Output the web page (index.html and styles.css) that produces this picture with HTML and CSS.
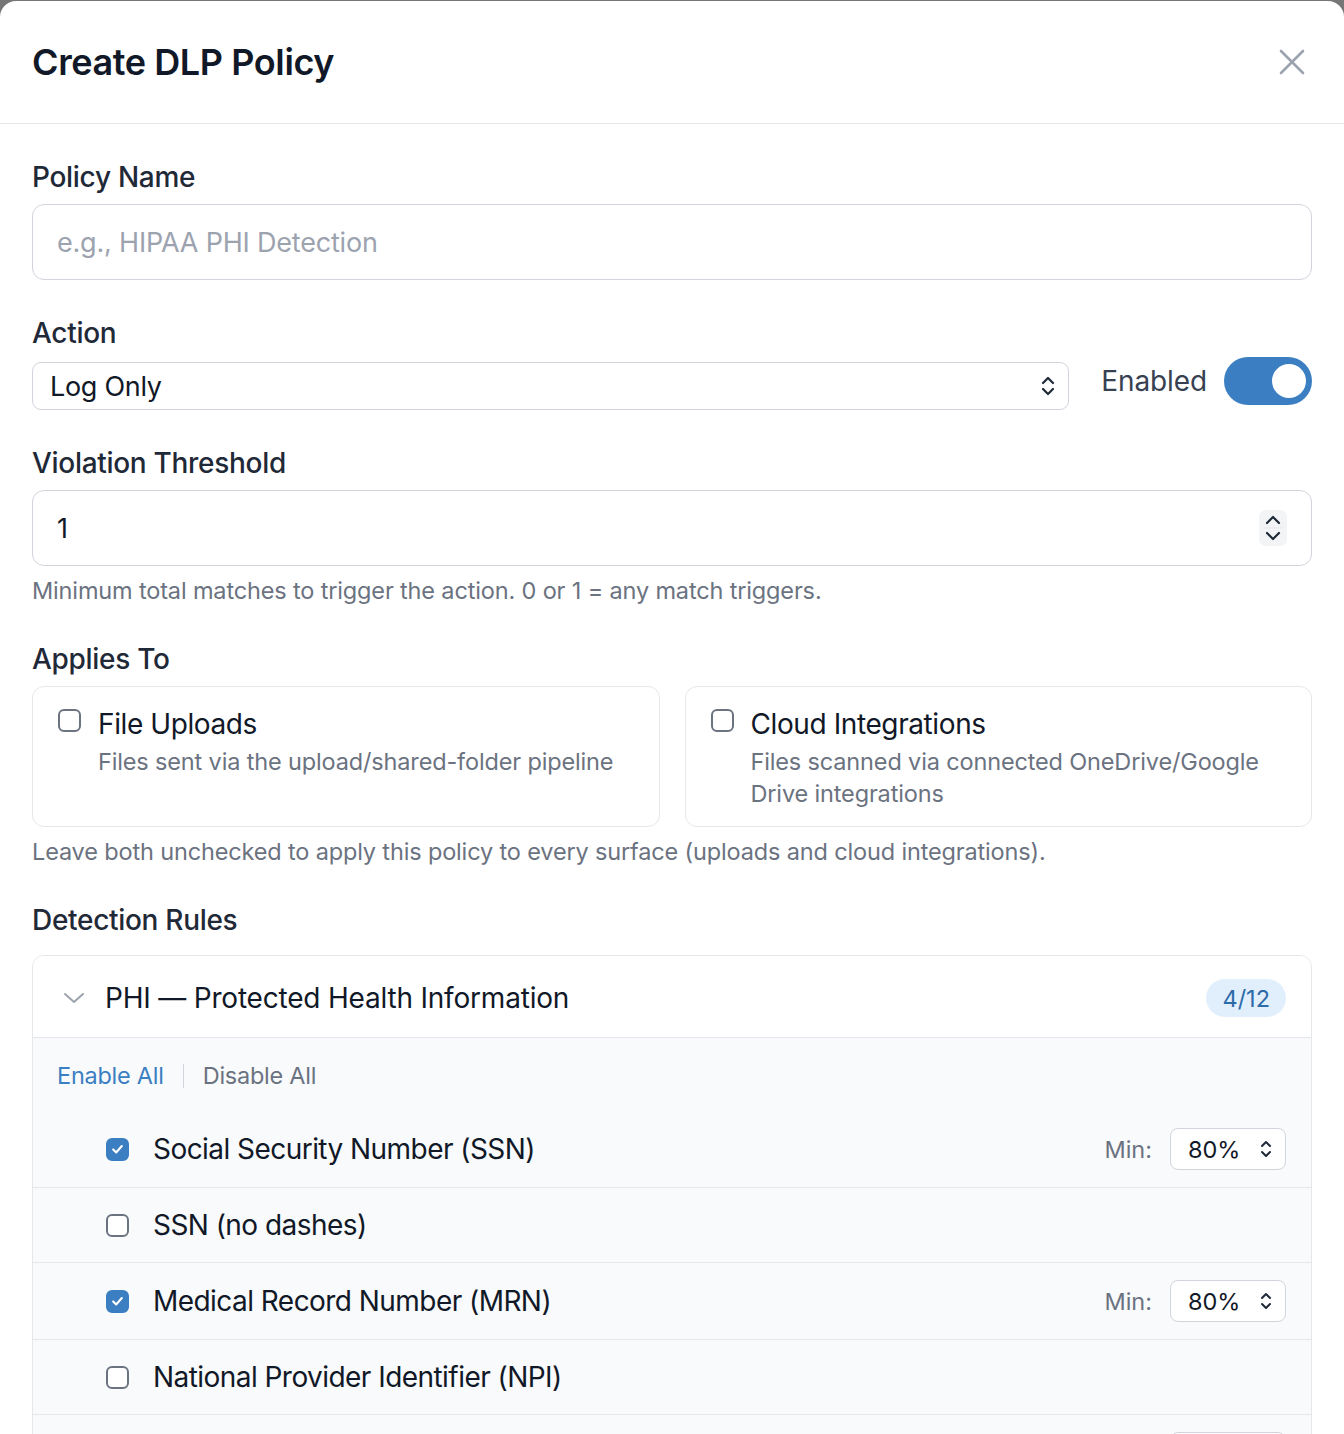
FILE: index.html
```html
<!DOCTYPE html>
<html lang="en">
<head>
<meta charset="utf-8">
<title>Create DLP Policy</title>
<link rel="stylesheet" href="styles.css">
</head>
<body>
<div class="modal">
  <header class="modal-header">
    <h1 class="modal-title">Create DLP Policy</h1>
    <button class="close-btn" aria-label="Close">
      <svg width="28" height="28" viewBox="0 0 28 28"><path d="M3 3 L25 25 M25 3 L3 25" stroke="#9ca3af" stroke-width="2.6" stroke-linecap="round" fill="none"/></svg>
    </button>
  </header>

  <div class="modal-body">
    <div class="field field-first">
      <label class="label">Policy Name</label>
      <input class="text-input" type="text" placeholder="e.g., HIPAA PHI Detection">
    </div>

    <div class="action-row">
      <div class="field grow">
        <label class="label label-action">Action</label>
        <div class="select">
          <span>Log Only</span>
          <svg class="updown" width="16" height="24" viewBox="0 0 16 24"><path d="M3 9 L8 4 L13 9 M3 15 L8 20 L13 15" stroke="#1f2937" stroke-width="2.2" stroke-linecap="round" stroke-linejoin="round" fill="none"/></svg>
        </div>
      </div>
      <div class="enabled-group">
        <span class="enabled-text">Enabled</span>
        <span class="toggle"><span class="knob"></span></span>
      </div>
    </div>

    <div class="field">
      <label class="label">Violation Threshold</label>
      <div class="text-input number-input">
        <span>1</span>
        <span class="spinner">
          <svg width="28" height="36" viewBox="0 0 28 36"><path d="M8 13 L14 7 L20 13 M8 23 L14 29 L20 23" stroke="#1f2937" stroke-width="2.2" stroke-linecap="round" stroke-linejoin="round" fill="none"/><path d="M4 18 H24" stroke="#e5e7eb" stroke-width="1"/></svg>
        </span>
      </div>
      <p class="help">Minimum total matches to trigger the action. 0 or 1 = any match triggers.</p>
    </div>

    <div class="field">
      <label class="label">Applies To</label>
      <div class="surface-grid">
        <div class="surface-card">
          <span class="checkbox"></span>
          <div>
            <div class="surface-title">File Uploads</div>
            <div class="surface-desc">Files sent via the upload/shared-folder pipeline</div>
          </div>
        </div>
        <div class="surface-card">
          <span class="checkbox"></span>
          <div>
            <div class="surface-title">Cloud Integrations</div>
            <div class="surface-desc">Files scanned via connected OneDrive/Google Drive integrations</div>
          </div>
        </div>
      </div>
      <p class="help">Leave both unchecked to apply this policy to every surface (uploads and cloud integrations).</p>
    </div>

    <div class="field">
      <label class="label label-rules">Detection Rules</label>
      <div class="rules-card">
        <div class="rules-header">
          <svg class="chev" width="24" height="24" viewBox="0 0 24 24"><path d="M3 8 L12 16 L21 8" stroke="#9ca3af" stroke-width="2" stroke-linecap="round" stroke-linejoin="round" fill="none"/></svg>
          <span class="rules-title">PHI — Protected Health Information</span>
          <span class="badge">4/12</span>
        </div>
        <div class="rules-body">
          <div class="bulk">
            <a class="link-enable">Enable All</a>
            <span class="sep"></span>
            <a class="link-disable">Disable All</a>
          </div>
          <div class="rule">
            <span class="checkbox checked"><svg width="22" height="22" viewBox="0 0 22 22"><path d="M6 11.5 L9.5 15 L16 7.5" stroke="#fff" stroke-width="2.4" stroke-linecap="round" stroke-linejoin="round" fill="none"/></svg></span>
            <span class="rule-name">Social Security Number (SSN)</span>
            <span class="min-label">Min:</span>
            <div class="mini-select"><span>80%</span><svg width="14" height="22" viewBox="0 0 14 22"><path d="M3 8 L7 4 L11 8 M3 14 L7 18 L11 14" stroke="#1f2937" stroke-width="2" stroke-linecap="round" stroke-linejoin="round" fill="none"/></svg></div>
          </div>
          <div class="rule">
            <span class="checkbox"></span>
            <span class="rule-name">SSN (no dashes)</span>
          </div>
          <div class="rule">
            <span class="checkbox checked"><svg width="22" height="22" viewBox="0 0 22 22"><path d="M6 11.5 L9.5 15 L16 7.5" stroke="#fff" stroke-width="2.4" stroke-linecap="round" stroke-linejoin="round" fill="none"/></svg></span>
            <span class="rule-name">Medical Record Number (MRN)</span>
            <span class="min-label">Min:</span>
            <div class="mini-select"><span>80%</span><svg width="14" height="22" viewBox="0 0 14 22"><path d="M3 8 L7 4 L11 8 M3 14 L7 18 L11 14" stroke="#1f2937" stroke-width="2" stroke-linecap="round" stroke-linejoin="round" fill="none"/></svg></div>
          </div>
          <div class="rule">
            <span class="checkbox"></span>
            <span class="rule-name">National Provider Identifier (NPI)</span>
          </div>
          <div class="rule">
            <span class="checkbox checked"><svg width="22" height="22" viewBox="0 0 22 22"><path d="M6 11.5 L9.5 15 L16 7.5" stroke="#fff" stroke-width="2.4" stroke-linecap="round" stroke-linejoin="round" fill="none"/></svg></span>
            <span class="rule-name">DEA Registration Number</span>
            <span class="min-label">Min:</span>
            <div class="mini-select"><span>80%</span><svg width="14" height="22" viewBox="0 0 14 22"><path d="M3 8 L7 4 L11 8 M3 14 L7 18 L11 14" stroke="#1f2937" stroke-width="2" stroke-linecap="round" stroke-linejoin="round" fill="none"/></svg></div>
          </div>
        </div>
      </div>
    </div>
  </div>
</div>
</body>
</html>
```
FILE: styles.css
```css
* { box-sizing: border-box; }

html, body {
  margin: 0;
  background: #767676;
  font-family: Inter, "Noto Sans", "Liberation Sans", sans-serif;
  color: #111827;
}

.modal {
  margin-top: 1px;
  background: #fff;
  border-radius: 16px 16px 0 0;
  min-height: 1500px;
  overflow: hidden;
}

.modal-header {
  height: 123px;
  display: flex;
  align-items: center;
  justify-content: space-between;
  padding: 0 32px 0 32px;
  border-bottom: 1px solid #e5e7eb;
}

.modal-title {
  margin: 0;
  font-size: 36px;
  font-weight: 600;
  letter-spacing: -0.4px;
  color: #111827;
}

.close-btn {
  border: 0;
  background: none;
  padding: 0;
  margin-right: 6px;
  display: flex;
}

.modal-body {
  padding: 33px 32px 0 32px;
}

.field { margin-bottom: 32px; }
.field-first { margin-bottom: 33px; }

.label {
  display: block;
  font-size: 28px;
  line-height: 40px;
  font-weight: 500;
  color: #1f2937;
  margin-bottom: 7px;
  letter-spacing: -0.3px;
}

.label-action { margin-bottom: 9px; }
.label-rules { margin-bottom: 15px; }

.text-input {
  display: flex;
  align-items: center;
  width: 100%;
  height: 76px;
  border: 1px solid #d1d5db;
  border-radius: 12px;
  padding: 0 24px;
  font-family: inherit;
  font-size: 27px;
  letter-spacing: -0.2px;
  color: #111827;
  background: #fff;
  outline: none;
}

.text-input::placeholder { color: #9ca3af; }

.number-input { justify-content: space-between; padding-right: 24px; }

.spinner {
  display: flex;
  background: #f3f4f6;
  border-radius: 7px;
}

.action-row {
  display: flex;
  align-items: flex-end;
  gap: 32px;
  margin-bottom: 33px;
}

.action-row .field { margin-bottom: 0; }
.grow { flex: 1; }

.select {
  height: 48px;
  border: 1px solid #d1d5db;
  border-radius: 9px;
  display: flex;
  align-items: center;
  justify-content: space-between;
  padding: 0 12px 0 17px;
  font-size: 27px;
  letter-spacing: -0.3px;
  color: #111827;
}

.enabled-group {
  display: flex;
  align-items: center;
  gap: 17px;
  margin-bottom: 5px;
}

.enabled-text {
  font-size: 28px;
  color: #374151;
  letter-spacing: -0.1px;
}

.toggle {
  width: 88px;
  height: 48px;
  border-radius: 24px;
  background: #3b7fc2;
  display: flex;
  align-items: center;
  justify-content: flex-end;
  padding: 0 6px;
}

.knob {
  width: 34px;
  height: 34px;
  border-radius: 50%;
  background: #fff;
}

.help {
  margin: 9px 0 0 0;
  font-size: 23.5px;
  line-height: 32px;
  letter-spacing: -0.15px;
  color: #6b7280;
}

.surface-grid {
  display: grid;
  grid-template-columns: 1fr 1fr;
  gap: 25px;
}

.surface-card {
  display: flex;
  align-items: flex-start;
  gap: 17px;
  border: 1px solid #e5e7eb;
  border-radius: 12px;
  padding: 17px 24px 16px 25px;
  min-height: 140px;
}

.checkbox {
  flex: none;
  width: 23px;
  height: 23px;
  border: 2px solid #6b7280;
  border-radius: 6px;
  background: #fff;
  margin-top: 5px;
  display: flex;
  align-items: center;
  justify-content: center;
}

.checkbox.checked {
  background: #3b7fc2;
  border-color: #3b7fc2;
}

.surface-title {
  font-size: 28px;
  line-height: 40px;
  letter-spacing: -0.4px;
  color: #111827;
  margin-bottom: 2px;
}

.surface-desc {
  font-size: 23.5px;
  line-height: 32px;
  letter-spacing: -0.15px;
  color: #6b7280;
}

.rules-card {
  border: 1px solid #e5e7eb;
  border-radius: 12px;
  overflow: hidden;
}

.rules-header {
  height: 82px;
  display: flex;
  align-items: center;
  padding: 3px 25px 0 29px;
  border-bottom: 1px solid #e5e7eb;
  background: #fff;
}

.chev { flex: none; margin-right: 19px; }

.rules-title {
  flex: 1;
  font-size: 28px;
  color: #111827;
  letter-spacing: -0.2px;
}

.badge {
  height: 38px;
  padding: 0 16px;
  border-radius: 19px;
  background: #e1effc;
  color: #2c6aa8;
  font-size: 23.5px;
  display: flex;
  align-items: center;
}

.rules-body { background: #f8fafc; }

.bulk {
  display: flex;
  align-items: center;
  gap: 19px;
  padding: 22px 24px 19px 24px;
  font-size: 23.5px;
  line-height: 32px;
  letter-spacing: -0.25px;
}

.link-enable { color: #3b7fc2; }
.link-disable { color: #6b7280; }

.sep {
  width: 1px;
  height: 24px;
  background: #d1d5db;
}

.rule {
  display: flex;
  align-items: center;
  padding: 17px 25px 17px 73px;
  min-height: 75px;
  border-bottom: 1px solid #e5e7eb;
}

.rule .checkbox { margin-top: 0; }

.rule-name {
  flex: 1;
  margin-left: 24px;
  font-size: 28px;
  line-height: 40px;
  color: #111827;
  letter-spacing: -0.55px;
}

.min-label {
  font-size: 23.5px;
  color: #6b7280;
  margin-right: 18px;
}

.mini-select {
  width: 116px;
  height: 42px;
  border: 1px solid #d1d5db;
  border-radius: 8px;
  background: #fff;
  display: flex;
  align-items: center;
  justify-content: space-between;
  padding: 0 12px 0 17px;
  font-size: 23.5px;
  color: #111827;
}
```
